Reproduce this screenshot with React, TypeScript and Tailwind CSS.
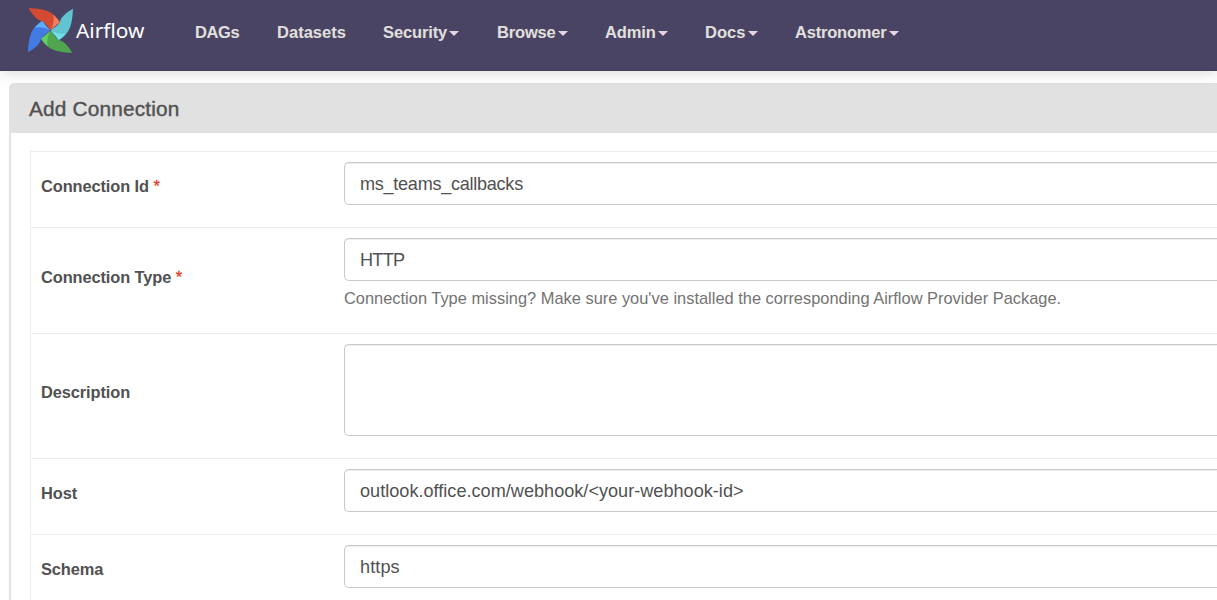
import type { ReactNode } from 'react';

const navItems = [
  { label: 'DAGs', menu: false, width: 'w-[82px]', tracking: 'tracking-[-0.4px]' },
  { label: 'Datasets', menu: false, width: 'w-[106px]', tracking: 'tracking-[0.02px]' },
  { label: 'Security', menu: true, width: 'w-[114px]', tracking: 'tracking-[-0.12px]' },
  { label: 'Browse', menu: true, width: 'w-[108px]', tracking: 'tracking-[-0.17px]' },
  { label: 'Admin', menu: true, width: 'w-[100px]', tracking: 'tracking-[-0.1px]' },
  { label: 'Docs', menu: true, width: 'w-[90px]', tracking: 'tracking-[0.05px]' },
  { label: 'Astronomer', menu: true, width: 'w-[110px]', tracking: 'tracking-[-0.2px]' },
];

function Blade({ angle, main, light }: { angle: number; main: string; light: string }) {
  return (
    <g transform={`rotate(${angle} 66 67)`}>
      <path d="M1 0C24 1 58 4 74 19C84 28 91 36 94 43C84 50 74 58 66 67C58 57 51 46 42 39C28 37 15 25 1 0Z" fill={main} />
      <path d="M74 19C84 28 91 36 94 43C84 50 74 58 66 67C75 50 78 34 74 19Z" fill={light} />
    </g>
  );
}

function Logo() {
  return (
    <svg viewBox="0 0 132 134" className="h-[45px] w-[45px] shrink-0">
      <Blade angle={0} main="#d54a32" light="#ef7d60" />
      <Blade angle={90} main="#62c3d1" light="#6fe0ec" />
      <Blade angle={180} main="#4fa550" light="#63cf68" />
      <Blade angle={270} main="#437ae4" light="#5aaef7" />
      <circle cx="66" cy="67" r="2.5" fill="#51504f" />
    </svg>
  );
}

function Row({ label, required, height, children }: { label: string; required?: boolean; height: string; children: ReactNode }) {
  return (
    <div className={`flex shrink-0 border-t border-l border-[#ededed] ${height}`}>
      <div className="flex w-[303px] shrink-0 items-center pb-[7px] pl-[10px] text-[16.4px] font-bold tracking-[-0.1px] whitespace-pre">
        {label}
        {required && <span className="font-normal text-[#e43921] [-webkit-text-stroke:0.3px_#e43921]"> *</span>}
      </div>
      <div className="grow pt-[10px] pl-[10px]">{children}</div>
    </div>
  );
}

function Field({ value, height = 'h-[43px]', tracking = '' }: { value: string; height?: string; tracking?: string }) {
  return (
    <div
      className={`flex items-center rounded-l-[5px] border border-r-0 border-[#c9c9c9] pt-[2px] pl-[15px] text-[18.1px] shadow-[inset_0_1px_1px_rgba(0,0,0,0.075)] ${height} ${tracking}`}
    >
      {value}
    </div>
  );
}

export default function App() {
  return (
    <div className="flex h-[600px] w-[1217px] flex-col overflow-hidden bg-white font-['Liberation_Sans',Arial,sans-serif] text-[#515151]">
      <header className="z-10 flex h-[71px] shrink-0 border-b border-[#443e5c] bg-[#4a4464] shadow-[0_2px_14px_rgba(0,0,0,0.15)]">
        <div className="flex w-[195px] shrink-0 items-start pt-[8px] pl-[28px]">
          <Logo />
          <span className="pt-[8px] pl-[3px] font-['Noto_Sans'] text-[20.8px] leading-[28px] text-white">Airflow</span>
        </div>
        <nav className="flex items-start pt-[21px] text-[16.5px] leading-[22px] font-bold text-[#e2e0de]">
          {navItems.map(({ label, menu, width, tracking }) => (
            <a key={label} className={`flex shrink-0 items-center whitespace-nowrap ${width} ${tracking}`}>
              {label}
              {menu && (
                <svg viewBox="0 0 10 5" className="mt-[3px] ml-[2px] h-[5px] w-[10px]">
                  <path d="M0 0H10L5 5Z" fill="#e5d5e3" />
                </svg>
              )}
            </a>
          ))}
        </nav>
      </header>
      <main className="flex grow flex-col pt-[12px] pl-[9px]">
        <div className="flex h-[50px] shrink-0 items-center rounded-tl-[5px] bg-[#e1e1e1] pt-[2px] pl-[20px] text-[20.8px] tracking-[0.18px] [-webkit-text-stroke:0.4px_#515151]">
          Add Connection
        </div>
        <div className="flex grow flex-col border-l-2 border-[#e2e2e2] pt-[18px] pl-[19px]">
          <Row label="Connection Id" required height="h-[76px]">
            <Field value="ms_teams_callbacks" tracking="tracking-[-0.28px]" />
          </Row>
          <Row label="Connection Type" required height="h-[106px]">
            <Field value="HTTP" tracking="tracking-[-0.7px]" />
            <p className="mt-[6px] text-[16.4px] leading-[23px] tracking-[0.01px] whitespace-nowrap text-[#737373]">
              Connection Type missing? Make sure you've installed the corresponding Airflow Provider Package.
            </p>
          </Row>
          <Row label="Description" height="h-[125px]">
            <Field value="" height="h-[92px]" />
          </Row>
          <Row label="Host" height="h-[76px]">
            <Field value="outlook.office.com/webhook/<your-webhook-id>" tracking="tracking-[0.015px]" />
          </Row>
          <Row label="Schema" height="h-[76px]">
            <Field value="https" tracking="tracking-[0.1px]" />
          </Row>
        </div>
      </main>
    </div>
  );
}
